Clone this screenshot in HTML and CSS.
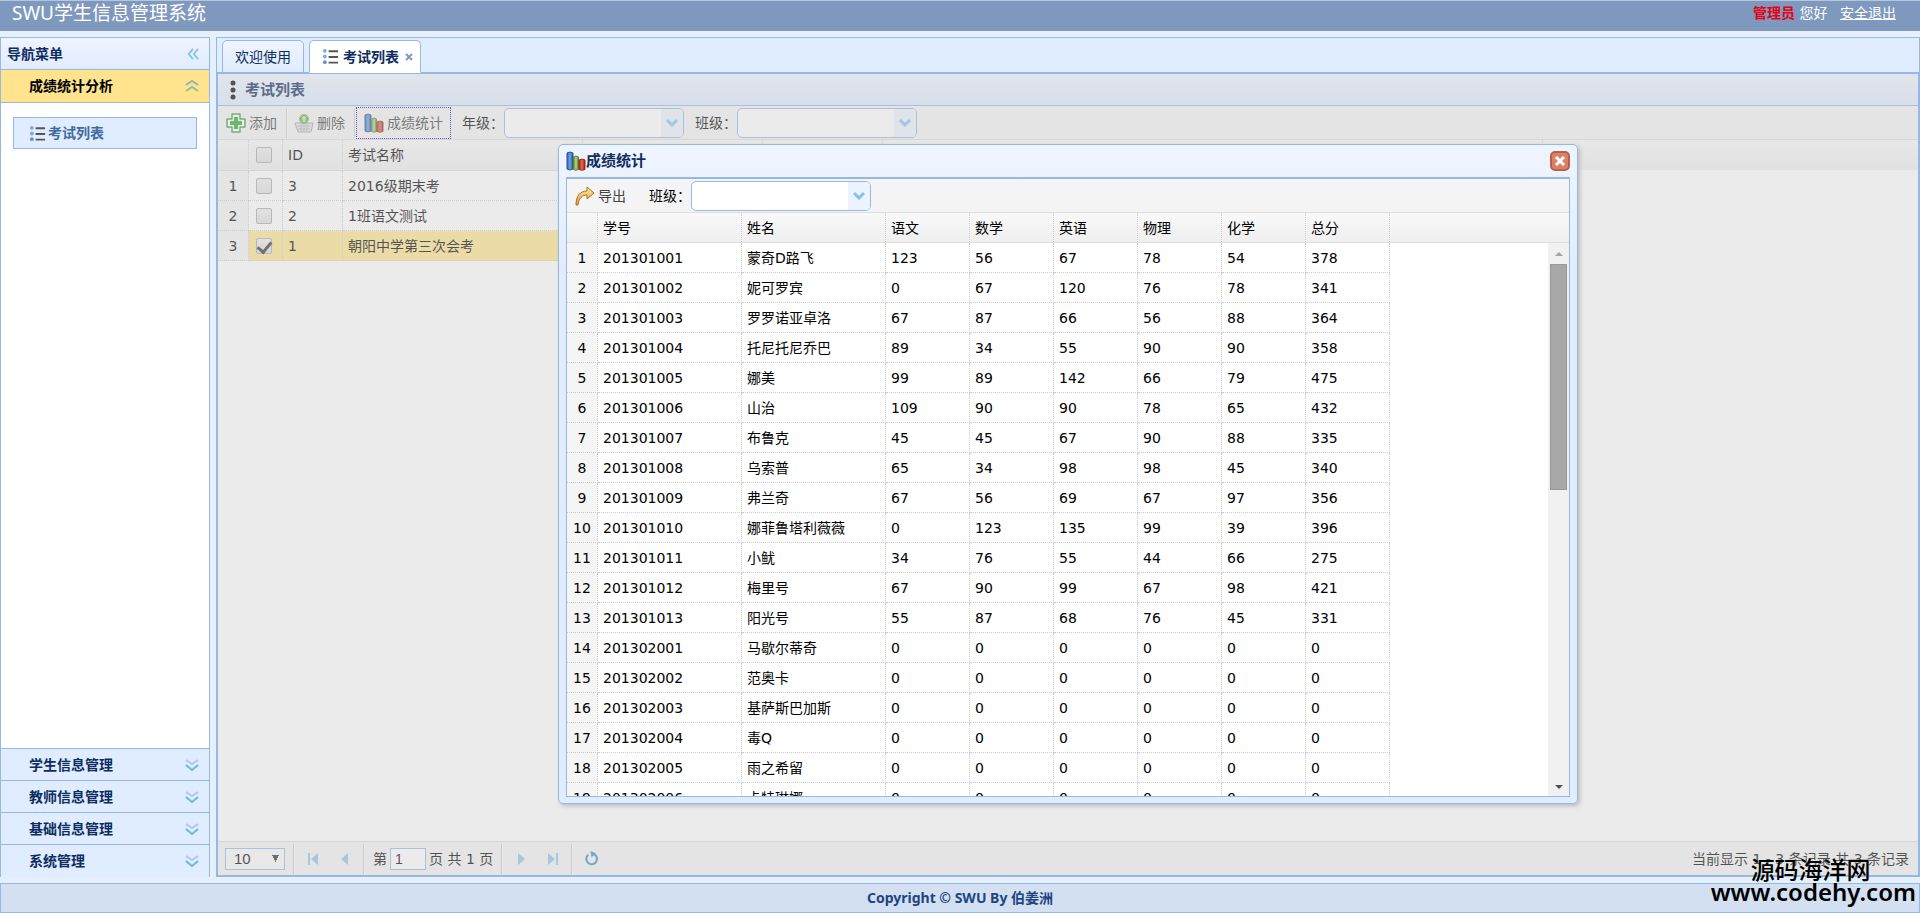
FILE: index.html
```html
<!DOCTYPE html>
<html lang="zh-CN">
<head>
    <meta charset="UTF-8">
    <meta name="viewport" content="width=device-width, initial-scale=1.0">
    <title>SWU学生信息管理系统</title>
    <link rel="stylesheet" href="styles.css">
</head>
<body>
    <!-- shared icons -->
    <svg class="sprite" aria-hidden="true">
        <defs>
            <linearGradient id="blue"><stop offset="0" stop-color="#2a5fae"/><stop offset=".5" stop-color="#6fa4e6"/><stop offset="1" stop-color="#1f4f9c"/></linearGradient>
            <linearGradient id="green"><stop offset="0" stop-color="#5d8a2c"/><stop offset=".5" stop-color="#b5d98a"/><stop offset="1" stop-color="#4f7a25"/></linearGradient>
            <linearGradient id="red"><stop offset="0" stop-color="#a8221a"/><stop offset=".5" stop-color="#ee6a55"/><stop offset="1" stop-color="#8e1d14"/></linearGradient>
            <linearGradient id="gold" x2="0" y2="1"><stop offset="0" stop-color="#ffe9a3"/><stop offset="1" stop-color="#f09a28"/></linearGradient>
        </defs>
        <symbol id="list" viewBox="0 0 18 18">
            <circle cx="3" cy="3" r="2" fill="#7fa8dc"/><circle cx="3" cy="9" r="2" fill="#7fa8dc"/><circle cx="3" cy="15" r="2" fill="#6b8fc4"/>
            <path d="M7 3.500h10M7 9.500h10M7 15.500h10" stroke="#555" stroke-width="2"/>
        </symbol>
        <symbol id="chart" viewBox="0 0 20 20">
            <path d="M1 2q3-2 6 0v16q-3 2-6 0z" fill="url(#blue)" stroke="#2b5596"/>
            <path d="M7.500 6q2.500-2 5 0v12.500q-2.500 1.500-5 0z" fill="url(#green)" stroke="#5b8532"/>
            <path d="M13 9q3-2 6 0v9.500q-3 1.500-6 0z" fill="url(#red)" stroke="#9c2b20"/>
        </symbol>
        <symbol id="double-down" viewBox="0 0 14 14">
            <path d="M1 2l6 4 6-4" fill="none" stroke="#a9cdea" stroke-width="2"/>
            <path d="M1 7l6 5 6-5" fill="none" stroke="#6eb4e8" stroke-width="2"/>
        </symbol>
        <symbol id="arrow-down" viewBox="0 0 14 10">
            <path d="M2 2l5 5 5-5" fill="none" stroke="#84c3f0" stroke-width="3"/>
        </symbol>
    </svg>

    <header class="header">
        <h1>SWU学生信息管理系统</h1>
        <div class="user"><strong>管理员</strong> 您好 <a href="#">安全退出</a></div>
    </header>

    <div class="layout">
        <nav class="sidebar">
            <div class="nav-title">
                导航菜单
                <button class="tool" aria-label="收起"><svg viewBox="0 0 14 14"><path d="M7 1L2 7l5 6M13 1L8 7l5 6" fill="none" stroke="#84c0ee" stroke-width="2"/></svg></button>
            </div>
            <button class="acc-header acc-selected">成绩统计分析 <svg viewBox="0 0 14 14"><path d="M1 6l6-4 6 4M1 12l6-4 6 4" fill="none" stroke="#93b8a8" stroke-width="2"/></svg></button>
            <div class="acc-body">
                <a class="menu-item" href="#"><svg><use href="#list"/></svg>考试列表</a>
            </div>
            <button class="acc-header">学生信息管理 <svg><use href="#double-down"/></svg></button>
            <button class="acc-header">教师信息管理 <svg><use href="#double-down"/></svg></button>
            <button class="acc-header">基础信息管理 <svg><use href="#double-down"/></svg></button>
            <button class="acc-header">系统管理 <svg><use href="#double-down"/></svg></button>
        </nav>

        <main class="main">
            <div class="tabs">
                <button class="tab">欢迎使用</button>
                <button class="tab tab-selected"><svg><use href="#list"/></svg>考试列表<span class="tab-close"><svg viewBox="0 0 8 8"><path d="M1 1l6 6M7 1l-6 6" stroke="#7f99be" stroke-width="2"/></svg></span></button>
            </div>
            <div class="panel">
                <div class="panel-title">
                    <svg viewBox="0 0 6 20"><circle cx="3" cy="3" r="2.500"/><circle cx="3" cy="10" r="2.500"/><circle cx="3" cy="17" r="2.500"/></svg>
                    考试列表
                </div>
                <div class="toolbar">
                    <button class="btn">
                        <svg viewBox="0 0 20 20"><path d="M6 1h8v5h5v8h-5v5H6v-5H1V6h5z" fill="#fff" stroke="#3f9a3f" stroke-width="1.500" stroke-linejoin="round"/><path d="M8 4h4v4h4v4h-4v4H8v-4H4V8h4z" fill="#2fa52f"/></svg>
                        添加
                    </button>
                    <span class="sep"></span>
                    <button class="btn">
                        <svg viewBox="0 0 20 20"><path d="M1 10h18l-2 9H4z" fill="#e4e4e4" stroke="#a5a5a5"/><path d="M3 13h14M4 16h12M7 11v7M10 11v7M13 11v7" stroke="#b5b5b5"/><circle cx="10" cy="6" r="5" fill="#8cc063"/><path d="M10 2l4 4h-2v4H8V6H6z" fill="#c4e5a0" stroke="#5f9a3e"/></svg>
                        删除
                    </button>
                    <span class="sep"></span>
                    <button class="btn btn-focus"><svg><use href="#chart"/></svg>成绩统计</button>
                    <label for="grade">年级：</label>
                    <div class="combo"><input id="grade" type="text"><button aria-label="选择年级"><svg><use href="#arrow-down"/></svg></button></div>
                    <label for="clazz">班级：</label>
                    <div class="combo"><input id="clazz" type="text"><button aria-label="选择班级"><svg><use href="#arrow-down"/></svg></button></div>
                </div>
                <div class="grid">
                    <table class="exam-table">
                        <colgroup><col class="c-num"><col class="c-check"><col class="c-id"><col class="c-exam"><col class="c-time"><col class="c-grade"><col class="c-rest"></colgroup>
                        <thead>
                            <tr><th></th><th><input type="checkbox" aria-label="全选"></th><th>ID</th><th>考试名称</th><th></th><th></th><th></th></tr>
                        </thead>
                        <tbody>
                            <tr><td>1</td><td><input type="checkbox" aria-label="选择 3"></td><td>3</td><td>2016级期末考</td><td></td><td></td><td></td></tr>
                            <tr><td>2</td><td><input type="checkbox" aria-label="选择 2"></td><td>2</td><td>1班语文测试</td><td></td><td></td><td></td></tr>
                            <tr class="row-selected"><td>3</td><td><input type="checkbox" aria-label="选择 1" checked></td><td>1</td><td>朝阳中学第三次会考</td><td></td><td></td><td></td></tr>
                        </tbody>
                    </table>
                </div>
                <div class="pager">
                    <select aria-label="每页条数"><option>10</option></select>
                    <span class="sep"></span>
                    <button class="page-btn" aria-label="首页"><svg viewBox="0 0 12 12"><path d="M1 0h2v12H1zM11 0v12L4 6z"/></svg></button>
                    <button class="page-btn" aria-label="上一页"><svg viewBox="0 0 12 12"><path d="M9 0v12L2 6z"/></svg></button>
                    <span class="sep"></span>
                    <label for="page">第</label>
                    <input id="page" type="text" value="1">
                    <span class="page-total">页 共 1 页</span>
                    <span class="sep"></span>
                    <button class="page-btn" aria-label="下一页"><svg viewBox="0 0 12 12"><path d="M3 0v12l7-6z"/></svg></button>
                    <button class="page-btn" aria-label="尾页"><svg viewBox="0 0 12 12"><path d="M9 0h2v12H9zM1 0v12l7-6z"/></svg></button>
                    <span class="sep"></span>
                    <button class="page-btn page-reload" aria-label="刷新"><svg viewBox="0 0 14 14"><path d="M9.500 3A5 5 0 1 1 4 3.500" fill="none" stroke="#3f8fc4" stroke-width="2"/><path d="M6 0l5 2-4 4z" fill="#3f8fc4"/></svg></button>
                    <span class="page-info">当前显示 1 - 3 条记录 共 3 条记录</span>
                </div>
                <div class="mask"></div>
            </div>
        </main>
    </div>

    <footer class="footer">Copyright © SWU By 伯姜洲</footer>

    <section class="window" aria-label="成绩统计">
        <div class="window-title">
            <svg><use href="#chart"/></svg>成绩统计
            <button class="window-close" aria-label="关闭"><svg viewBox="0 0 20 20"><rect x="1" y="1" width="18" height="18" rx="4" fill="#dc8263" stroke="#b5624a" stroke-width="2"/><path d="M6 6l8 8M14 6l-8 8" stroke="#fff" stroke-width="3"/></svg></button>
        </div>
        <div class="window-body">
            <div class="toolbar">
                <button class="btn">
                    <svg viewBox="0 0 20 20"><path d="M1 19C1 10 5 5 12 5V1l7 6-7 6V9C7 9 4 12 3 19z" fill="url(#gold)" stroke="#9b7434" stroke-linejoin="round"/></svg>
                    导出
                </button>
                <label for="score-class">班级：</label>
                <div class="combo"><input id="score-class" type="text"><button aria-label="选择班级"><svg><use href="#arrow-down"/></svg></button></div>
            </div>
            <div class="score-head">
                <table class="score-table">
                    <colgroup><col class="c-num"><col class="c-name"><col class="c-name"><col><col><col><col><col><col></colgroup>
                    <thead>
                        <tr><th></th><th>学号</th><th>姓名</th><th>语文</th><th>数学</th><th>英语</th><th>物理</th><th>化学</th><th>总分</th></tr>
                    </thead>
                </table>
            </div>
            <div class="score-view">
                <div class="score-rows">
                    <table class="score-table" aria-label="成绩">
                        <colgroup><col class="c-num"><col class="c-name"><col class="c-name"><col><col><col><col><col><col></colgroup>
                        <tbody>
                            <tr><td>1</td><td>201301001</td><td>蒙奇D路飞</td><td>123</td><td>56</td><td>67</td><td>78</td><td>54</td><td>378</td></tr>
                            <tr><td>2</td><td>201301002</td><td>妮可罗宾</td><td>0</td><td>67</td><td>120</td><td>76</td><td>78</td><td>341</td></tr>
                            <tr><td>3</td><td>201301003</td><td>罗罗诺亚卓洛</td><td>67</td><td>87</td><td>66</td><td>56</td><td>88</td><td>364</td></tr>
                            <tr><td>4</td><td>201301004</td><td>托尼托尼乔巴</td><td>89</td><td>34</td><td>55</td><td>90</td><td>90</td><td>358</td></tr>
                            <tr><td>5</td><td>201301005</td><td>娜美</td><td>99</td><td>89</td><td>142</td><td>66</td><td>79</td><td>475</td></tr>
                            <tr><td>6</td><td>201301006</td><td>山治</td><td>109</td><td>90</td><td>90</td><td>78</td><td>65</td><td>432</td></tr>
                            <tr><td>7</td><td>201301007</td><td>布鲁克</td><td>45</td><td>45</td><td>67</td><td>90</td><td>88</td><td>335</td></tr>
                            <tr><td>8</td><td>201301008</td><td>乌索普</td><td>65</td><td>34</td><td>98</td><td>98</td><td>45</td><td>340</td></tr>
                            <tr><td>9</td><td>201301009</td><td>弗兰奇</td><td>67</td><td>56</td><td>69</td><td>67</td><td>97</td><td>356</td></tr>
                            <tr><td>10</td><td>201301010</td><td>娜菲鲁塔利薇薇</td><td>0</td><td>123</td><td>135</td><td>99</td><td>39</td><td>396</td></tr>
                            <tr><td>11</td><td>201301011</td><td>小鱿</td><td>34</td><td>76</td><td>55</td><td>44</td><td>66</td><td>275</td></tr>
                            <tr><td>12</td><td>201301012</td><td>梅里号</td><td>67</td><td>90</td><td>99</td><td>67</td><td>98</td><td>421</td></tr>
                            <tr><td>13</td><td>201301013</td><td>阳光号</td><td>55</td><td>87</td><td>68</td><td>76</td><td>45</td><td>331</td></tr>
                            <tr><td>14</td><td>201302001</td><td>马歇尔蒂奇</td><td>0</td><td>0</td><td>0</td><td>0</td><td>0</td><td>0</td></tr>
                            <tr><td>15</td><td>201302002</td><td>范奥卡</td><td>0</td><td>0</td><td>0</td><td>0</td><td>0</td><td>0</td></tr>
                            <tr><td>16</td><td>201302003</td><td>基萨斯巴加斯</td><td>0</td><td>0</td><td>0</td><td>0</td><td>0</td><td>0</td></tr>
                            <tr><td>17</td><td>201302004</td><td>毒Q</td><td>0</td><td>0</td><td>0</td><td>0</td><td>0</td><td>0</td></tr>
                            <tr><td>18</td><td>201302005</td><td>雨之希留</td><td>0</td><td>0</td><td>0</td><td>0</td><td>0</td><td>0</td></tr>
                            <tr><td>19</td><td>201302006</td><td>卡特琳娜</td><td>0</td><td>0</td><td>0</td><td>0</td><td>0</td><td>0</td></tr>
                        </tbody>
                    </table>
                </div>
                <div class="scrollbar">
                    <svg viewBox="0 0 8 4"><path d="M0 4l4-4 4 4z" fill="#a3a3a3"/></svg>
                    <div class="track"><div class="thumb"></div></div>
                    <svg viewBox="0 0 8 4"><path d="M0 0l4 4 4-4z" fill="#505050"/></svg>
                </div>
            </div>
        </div>
    </section>

    <div class="watermark"><span>源码海洋网</span><b>www.codehy.com</b></div>
</body>
</html>
```

FILE: styles.css
```css
* {
    box-sizing: border-box;
}
body {
    margin: 0;
    height: 100vh;
    display: flex;
    flex-direction: column;
    overflow: hidden;
    background-color: #e6f0fb;
    color: #000;
    font-family: "DejaVu Sans", "Noto Sans CJK SC", sans-serif;
    font-size: 14px;
    line-height: 20px;
}
button, input, select {
    font: inherit;
    color: inherit;
    margin: 0;
}
button {
    border: none;
    padding: 0;
    background: none;
    cursor: pointer;
}
svg {
    flex: none;
    display: block;
}
.sprite {
    position: absolute;
    width: 0;
    height: 0;
}

/* header */
.header {
    height: 31px;
    flex: none;
    display: flex;
    justify-content: space-between;
    padding: 0 24px 0 12px;
    border-top: 1px solid #b4c6de;
    background-color: #7f99be;
    color: #fff;
}
.header h1 {
    margin: 0;
    font: 19px/24px "Noto Sans", "Noto Sans CJK SC", sans-serif;
}
.user {
    line-height: 25px;
}
.user strong {
    color: #e60012;
}
.user a {
    color: #fff;
    margin-left: 8px;
}

.layout {
    flex: 1;
    min-height: 0;
    display: flex;
    gap: 6px;
    padding: 6px 0;
}

/* left menu */
.sidebar {
    width: 210px;
    flex: none;
    display: flex;
    flex-direction: column;
    border: 1px solid #95b8e7;
    border-bottom: none;
    background-color: #fff;
    font-weight: bold;
    color: #0e2d5f;
}
.nav-title {
    height: 31px;
    flex: none;
    display: flex;
    align-items: center;
    justify-content: space-between;
    padding: 0 10px 0 6px;
    background: linear-gradient(#eff5ff, #e0ecff);
}
.tool svg {
    width: 12px;
    height: 14px;
}
.acc-header {
    height: 32px;
    flex: none;
    display: flex;
    align-items: center;
    justify-content: space-between;
    padding: 0 10px 0 28px;
    border-top: 1px solid #95b8e7;
    background-color: #e0ecff;
    font-weight: bold;
}
.acc-header:last-child {
    height: 33px;
}
.acc-header svg {
    width: 14px;
    height: 14px;
}
.acc-selected {
    height: 33px;
    background-color: #ffe48d;
    color: #000;
}
.acc-body {
    flex: 1;
    padding: 14px 12px;
    border-top: 1px solid #95b8e7;
}
.menu-item {
    height: 32px;
    display: flex;
    align-items: center;
    gap: 2px;
    padding-left: 15px;
    border: 1px solid #95b8e7;
    background-color: #e0ecff;
    color: #416aa3;
    text-decoration: none;
}
.menu-item svg, .tab > svg {
    width: 17px;
    height: 17px;
}

/* tabs */
.main {
    flex: 1;
    min-width: 0;
    display: flex;
    flex-direction: column;
    border: 1px solid #95b8e7;
    background-color: #e0ecff;
}
.tabs {
    height: 35px;
    flex: none;
    display: flex;
    gap: 5px;
    padding: 2px 5px 0;
    border-bottom: 1px solid #95b8e7;
}
.tab {
    height: 33px;
    display: flex;
    align-items: center;
    padding: 0 12px;
    border: 1px solid #95b8e7;
    border-radius: 5px 5px 0 0;
    background: linear-gradient(#eff5ff, #e0ecff);
    color: #0e2d5f;
}
.tab-selected {
    gap: 4px;
    padding: 0 7px 0 12px;
    border-bottom-color: #fff;
    background: #fff;
    font-weight: bold;
}
.tab-close svg {
    width: 8px;
    height: 8px;
    margin-left: 2px;
}

/* exam list panel */
.panel {
    position: relative;
    flex: 1;
    min-height: 0;
    display: flex;
    flex-direction: column;
    border: 1px solid #95b8e7;
    background-color: #fff;
}
.panel-title {
    height: 32px;
    flex: none;
    display: flex;
    align-items: center;
    gap: 9px;
    padding-left: 12px;
    border-bottom: 1px solid #95b8e7;
    background: linear-gradient(#eff5ff, #e0ecff);
    color: #0e2d5f;
    font-size: 15px;
    font-weight: bold;
}
.panel-title svg {
    width: 6px;
    height: 20px;
}
.toolbar {
    height: 34px;
    flex: none;
    display: flex;
    align-items: center;
    padding: 0 2px;
    border-bottom: 1px solid #ddd;
    background-color: #f4f4f4;
}
.toolbar label {
    margin-left: 11px;
}
.btn {
    height: 32px;
    display: flex;
    align-items: center;
    gap: 3px;
    padding: 0 9px 0 6px;
    color: #444;
}
.btn svg {
    width: 20px;
    height: 20px;
}
.btn-focus {
    padding: 0 7px;
    border: 1px dotted #1a0dab;
}
.sep {
    width: 2px;
    height: 30px;
    border-left: 1px solid #ccc;
    border-right: 1px solid #fff;
}
.combo {
    width: 180px;
    height: 30px;
    flex: none;
    display: flex;
    overflow: hidden;
    border: 1px solid #95b8e7;
    border-radius: 5px;
    background-color: #fff;
}
.combo input {
    flex: 1;
    min-width: 0;
    border: none;
    padding: 0 4px;
    background: none;
}
.combo button {
    width: 22px;
    display: grid;
    place-items: center;
    background-color: #ebf3ff;
}
.combo svg {
    width: 14px;
    height: 10px;
}

/* tables */
table {
    table-layout: fixed;
    border-collapse: separate;
    border-spacing: 0;
}
th, td {
    height: 30px;
    padding: 0 5px;
    border-right: 1px dotted #ccc;
    border-bottom: 1px dotted #ccc;
    font-weight: normal;
    text-align: left;
    white-space: nowrap;
}
th {
    border-bottom: none;
}
td:first-child {
    padding: 0;
    background-color: #f5f5f5;
    text-align: center;
}
.c-num { width: 31px; }
.c-check { width: 34px; }
.c-id { width: 60px; }
.c-exam { width: 240px; }
.c-time { width: 180px; }
.c-grade { width: 120px; }
.c-rest { width: 660px; }
.c-name { width: 144px; }
.grid {
    flex: 1;
    min-height: 0;
    overflow: hidden;
    /* header strip runs past the last column */
    background: linear-gradient(#f9f9f9, #efefef) 0 0 / 100% 30px no-repeat;
}
.exam-table {
    width: 1325px;
}
.exam-table th {
    height: 31px;
    border-bottom: 1px solid #ddd;
}
.exam-table th:nth-child(2), .exam-table td:nth-child(2) {
    padding: 0 0 0 7px;
}
.row-selected td:not(:first-child) {
    background-color: #ffe48d;
}
input[type="checkbox"] {
    appearance: none;
    width: 16px;
    height: 16px;
    display: block;
    border: 1px solid #aaa;
    border-radius: 2px;
    background: linear-gradient(#eee, #dedede);
}
input[type="checkbox"]:checked::before {
    content: "";
    display: block;
    width: 6px;
    height: 11px;
    margin: 0 auto;
    border: solid #333;
    border-width: 0 3px 3px 0;
    transform: rotate(40deg);
}

/* pager */
.pager {
    height: 34px;
    flex: none;
    display: flex;
    align-items: center;
    padding: 0 9px 0 7px;
    border-top: 1px solid #ddd;
    background-color: #f4f4f4;
}
.pager select {
    appearance: none;
    width: 60px;
    height: 22px;
    margin-right: 3px;
    padding: 0 8px;
    border: 1px solid #95b8e7;
    border-radius: 0;
    background: #fafafa conic-gradient(from 333deg at 50% 100%, #333 54deg, transparent 0) no-repeat 46px 6px / 7px 7px;
    font-family: "Liberation Sans", sans-serif;
    font-size: 15px;
}
.pager input {
    width: 36px;
    height: 22px;
    margin: 0 3px;
    padding: 0 4px;
    border: 1px solid #95b8e7;
    background-color: #fff;
    font-family: "Liberation Sans", sans-serif;
}
.pager label {
    margin-left: 3px;
}
.page-total {
    margin-right: 3px;
}
.pager .sep {
    margin: 0 5px;
}
.page-btn {
    width: 26px;
    height: 26px;
    display: grid;
    place-items: center;
}
.page-btn + .page-btn {
    margin-left: 6px;
}
.page-btn svg {
    width: 12px;
    height: 12px;
    fill: #8fc4e6;
}
.page-reload svg {
    width: 15px;
    height: 15px;
}
.page-info {
    margin-left: auto;
}
.mask {
    position: absolute;
    inset: 0;
    background-color: #ccc;
    opacity: .4;
}

.footer {
    height: 30px;
    flex: none;
    border: 1px solid #95b8e7;
    background-color: #d2e0f2;
    color: #1f4580;
    font: bold 14px/28px "Noto Sans", "Noto Sans CJK SC", sans-serif;
    text-align: center;
}

/* score window */
.window {
    position: absolute;
    left: 558px;
    top: 144px;
    width: 1020px;
    height: 660px;
    display: flex;
    flex-direction: column;
    padding: 0 7px 6px;
    border: 1px solid #95b8e7;
    border-radius: 5px;
    background: linear-gradient(#eff5ff, #e0ecff 20%);
    box-shadow: 2px 2px 4px #bbb;
}
.window-title {
    height: 32px;
    flex: none;
    display: flex;
    align-items: center;
    color: #0e2d5f;
    font-size: 15px;
    font-weight: bold;
}
.window-title svg {
    width: 20px;
    height: 20px;
}
.window-close {
    margin-left: auto;
}
.window-body {
    flex: 1;
    min-height: 0;
    display: flex;
    flex-direction: column;
    border: 1px solid #95b8e7;
    border-top-width: 2px;
    background-color: #fff;
}
.window-body .toolbar label {
    margin-left: 14px;
}
.score-head {
    flex: none;
    border-bottom: 1px solid #ddd;
    background: linear-gradient(#f9f9f9, #efefef);
}
.score-head th {
    height: 29px;
}
.score-table {
    width: 823px;
}
.score-view {
    flex: 1;
    min-height: 0;
    display: flex;
}
.score-rows {
    flex: 1;
    overflow: hidden;
}
.scrollbar {
    width: 21px;
    display: flex;
    flex-direction: column;
    align-items: center;
    gap: 8px;
    padding: 9px 0 7px;
    background-color: #f1f1f1;
}
.scrollbar svg {
    width: 8px;
    height: 4px;
}
.track {
    flex: 1;
    width: 17px;
}
.thumb {
    height: 44%;
    border: 1px solid #999;
    background-color: #a8a8a8;
}

.watermark {
    position: absolute;
    right: 4px;
    bottom: 10px;
    display: flex;
    flex-direction: column;
    font: 24px/22px "Noto Sans", "Noto Sans CJK SC", sans-serif;
}
.watermark span {
    padding-left: 40px;
    font-weight: 500;
}
.watermark b {
    font-weight: 600;
}
```
